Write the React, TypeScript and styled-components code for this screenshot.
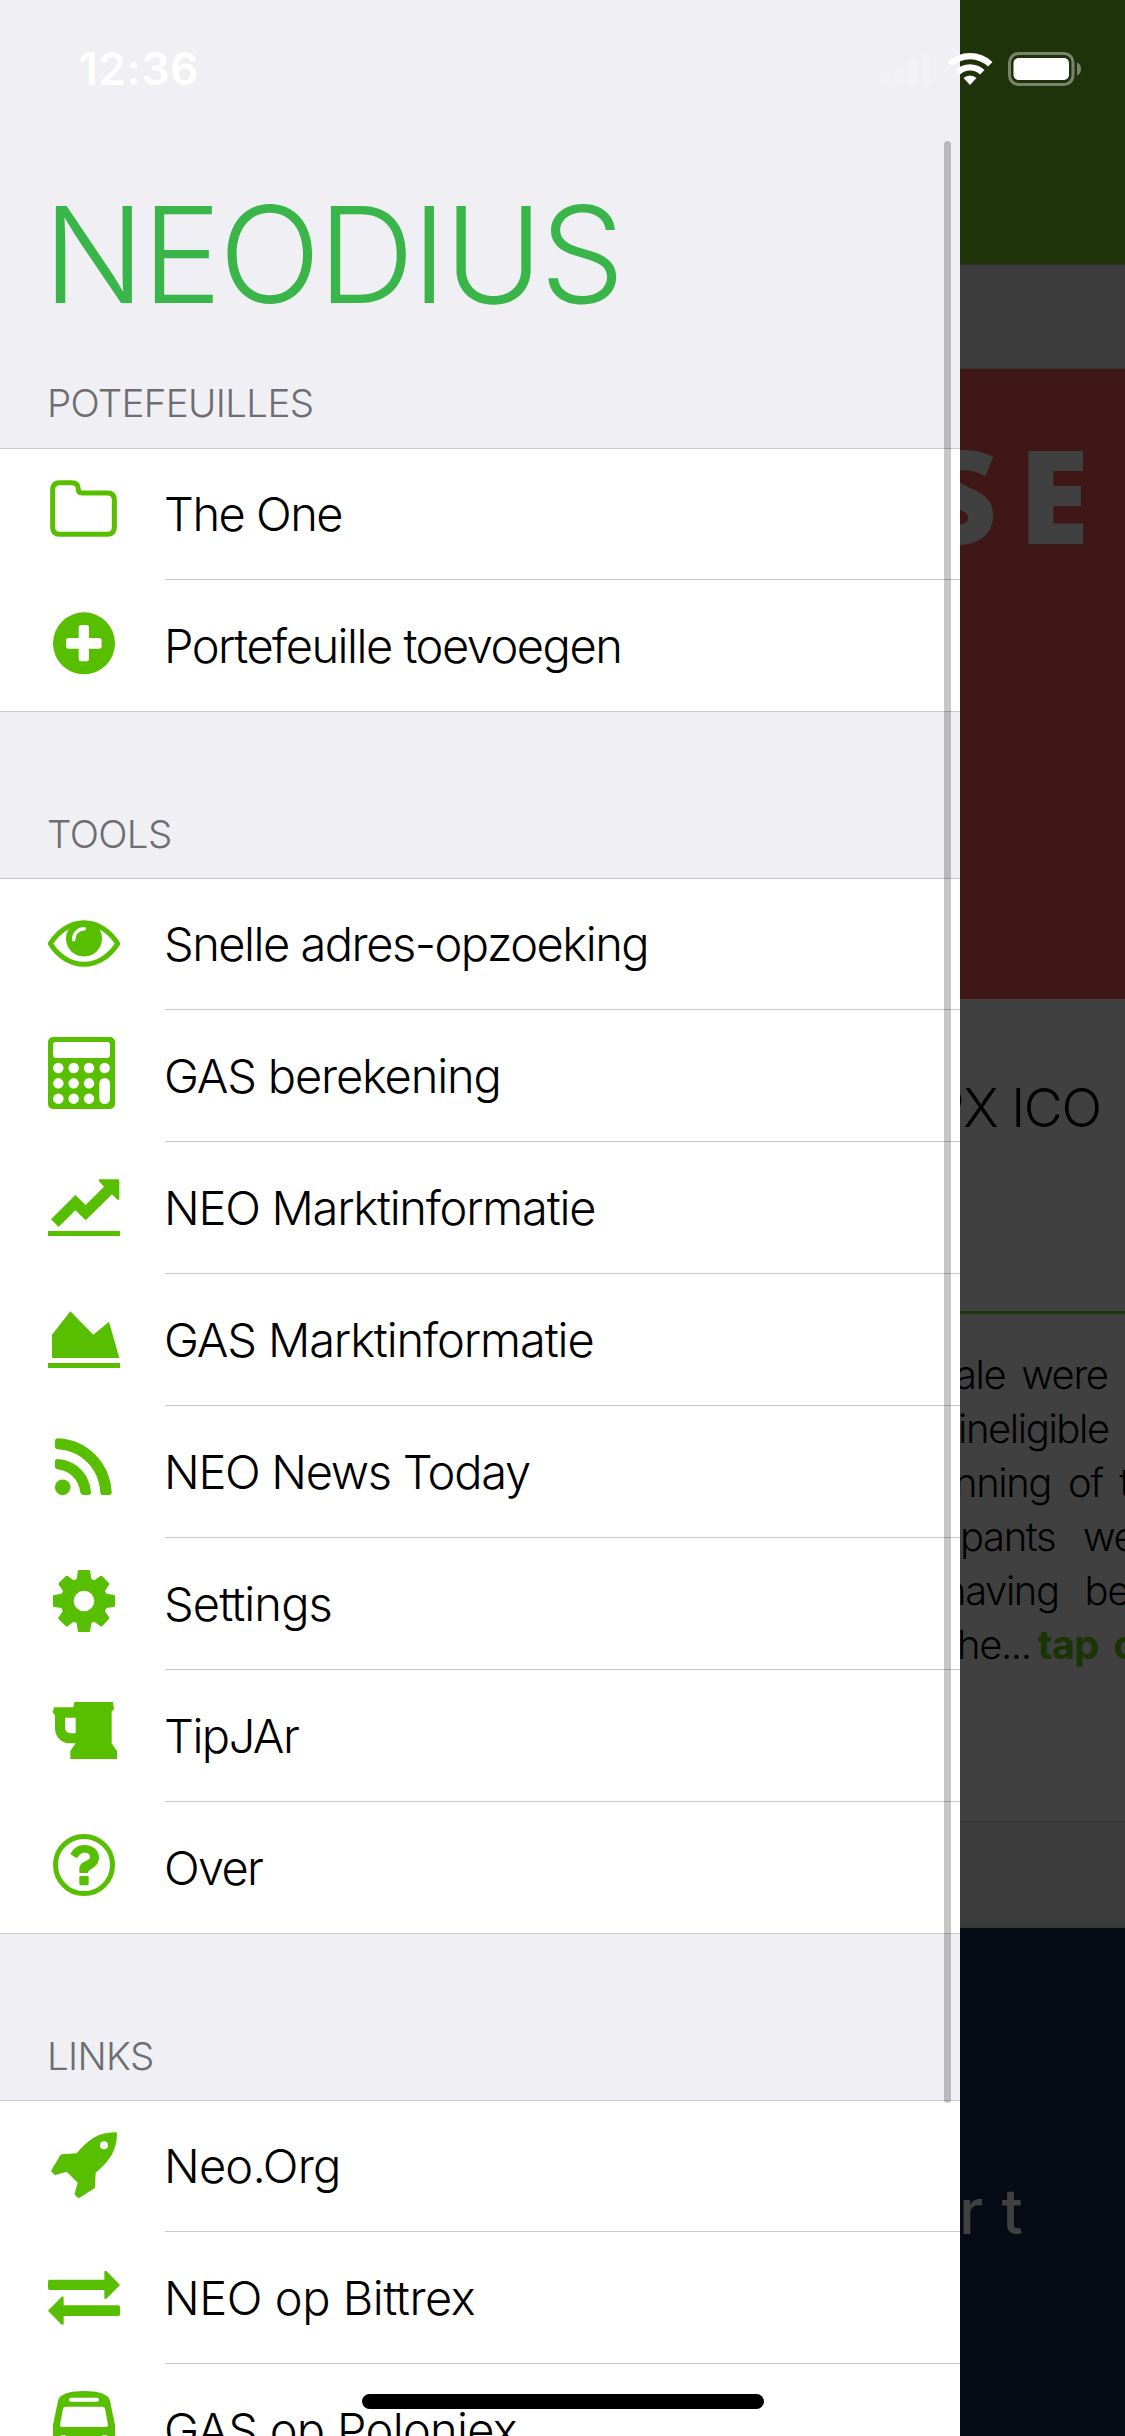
import React from "react";
import styled, { createGlobalStyle, css } from "styled-components";

const GREEN = "#58bf00";
const SEPARATOR = "#c8c7cc";
const SANS = `Inter, "Liberation Sans", sans-serif`;

const GlobalStyle = createGlobalStyle`
  *, *::before, *::after { box-sizing: border-box; }
  html, body { margin: 0; padding: 0; background: #404040; }
  body { font-family: ${SANS}; overflow: hidden; }
`;

const Screen = styled.div`
  position: relative;
  display: flex;
  width: 1125px;
  height: 2436px;
  overflow: hidden;
`;

/* ---------- drawer ---------- */

const Drawer = styled.aside`
  flex: 0 0 960px;
  height: 100%;
  overflow: hidden;
  background: #efeff4;
`;

const DrawerHeader = styled.header`
  height: 448px;
  padding: 169px 0 0 43px;
`;

const Brand = styled.h1`
  margin: 0;
  height: 170px;
  line-height: 170px;
  font-size: 134px;
  font-weight: 300;
  letter-spacing: -2.7px;
  color: #3ab54a;
  white-space: nowrap;
`;

const SectionTitle = styled.h2`
  margin: 0;
  padding-left: 47px;
  font-size: 38.5px;
  line-height: 48px;
  font-weight: 300;
  letter-spacing: -0.65px;
  color: #6d6d72;
  white-space: nowrap;
`;

const BrandSectionTitle = styled(SectionTitle)`
  margin-top: 40px;
  padding-left: 4px;
`;

const SectionHeader = styled.div`
  height: 166px;
  padding-top: 98px;
`;

const Group = styled.ul`
  list-style: none;
  margin: 0;
  padding: 0;
  background: #fff;
  border-top: 1px solid ${SEPARATOR};
  border-bottom: 1px solid ${SEPARATOR};
`;

const Label = styled.span<{ $tracking: number }>`
  flex: 1;
  height: 100%;
  margin-left: 45px;
  border-bottom: 1px solid ${SEPARATOR};
  font-size: 47px;
  line-height: 131px;
  font-weight: 300;
  letter-spacing: ${(p) => p.$tracking}px;
  text-indent: -1px;
  color: #000;
  white-space: nowrap;
`;

const Row = styled.li`
  display: flex;
  align-items: flex-start;
  height: 132px;
  padding-left: 48px;

  &:first-child { height: 131px; }
  &:first-child ${Label} { line-height: 129px; }
  &:last-child { height: 131px; }
  &:last-child ${Label} { border-bottom: none; }
`;

const Glyph = styled.svg`
  flex: 0 0 72px;
  height: 131px;
  fill: ${GREEN};
`;

/* ---------- dimmed page behind the drawer ---------- */

const Page = styled.main`
  flex: 1;
  display: flex;
  flex-direction: column;
  height: 100%;
  overflow: hidden;
  background: #404040;
`;

const NavBar = styled.div`
  flex: 0 0 265px;
  background: #1e330a;
  border-bottom: 1px solid #2f2f2f;
`;

const Gap = styled.div<{ $height: number; $line?: boolean }>`
  flex: 0 0 ${(p) => p.$height}px;
  background: #3c3c3c;
  border-bottom: 1px solid #363636;
  ${(p) => p.$line && css`border-top: 1px solid #333;`}
`;

const RedBanner = styled.div`
  flex: 0 0 630px;
  padding-top: 61px;
  background: #3f1717;
`;

const BannerWord = styled.div`
  margin-left: -37px;
  font-family: "Open Sans", "Noto Sans", sans-serif;
  font-size: 129px;
  line-height: 129px;
  font-weight: 800;
  letter-spacing: 21px;
  color: #404040;
  white-space: nowrap;
`;

const Article = styled.article`
  flex: 0 0 822px;
  overflow: hidden;
`;

const ArticleTitle = styled.h3`
  height: 312px;
  margin: 0;
  padding-top: 77px;
  margin-left: -29px;
  font-size: 53.5px;
  line-height: 64px;
  font-weight: 300;
  letter-spacing: -1.3px;
  color: #000;
  white-space: nowrap;
`;

const Rule = styled.div`
  height: 3px;
  margin-bottom: 34px;
  background: #1d360a;
`;

const Line = styled.p<{ $shift: number; $gap: number }>`
  margin: 0 0 0 ${(p) => p.$shift}px;
  font-size: 40px;
  line-height: 54px;
  font-weight: 300;
  letter-spacing: -1.4px;
  word-spacing: ${(p) => p.$gap}px;
  color: #000;
  white-space: nowrap;
`;

const More = styled.b`
  margin-left: 7px;
  font-weight: 700;
  letter-spacing: -0.8px;
  word-spacing: 6px;
  color: #1a3504;
`;

const NavyBanner = styled.div`
  flex: 1;
  padding-top: 238px;
  background: #060b15;
`;

const NavyWord = styled.div`
  margin-left: -1px;
  font-size: 63px;
  line-height: 90px;
  font-weight: 500;
  letter-spacing: 17px;
  color: #404040;
  white-space: nowrap;
`;

/* ---------- overlays ---------- */

const StatusBar = styled.div`
  position: absolute;
  inset: 0 0 auto 0;
  display: flex;
  align-items: center;
  height: 138px;
  padding: 0 43px 0 79px;
  color: #fff;
`;

const Clock = styled.time`
  flex: 1;
  font-size: 44.5px;
  font-weight: 600;
  letter-spacing: 0.5px;
`;

const StatusIcons = styled.svg`
  width: 202px;
  height: 36px;
  fill: #fff;
`;

const ScrollThumb = styled.div`
  position: absolute;
  left: 944px;
  top: 141px;
  width: 7px;
  height: 1962px;
  border-radius: 4px;
  background: rgba(0, 0, 0, 0.225);
`;

const HomeIndicator = styled.div`
  position: absolute;
  left: 362px;
  top: 2394px;
  width: 402px;
  height: 15px;
  border-radius: 8px;
  background: #000;
`;

/* ---------- icons ---------- */

const glyphs: Record<string, { top: number; art: React.ReactNode }> = {
  folder: {
    top: 27,
    art: (
      <path
        d="M38 149 Q38 128 59 128 H94 Q115 128 115 148 Q115 159 126 159 H202 Q223 159 223 180 V262 Q223 283 202 283 H59 Q38 283 38 262 Z"
        fill="none" stroke={GREEN} strokeWidth="15"
      />
    ),
  },
  plus: {
    top: 420,
    art: (
      <>
        <circle cx="132" cy="610" r="93" />
        <rect x="116" y="555" width="31" height="109" rx="8" fill="#fff" />
        <rect x="78" y="594" width="107" height="32" rx="8" fill="#fff" />
      </>
    ),
  },
  eye: {
    top: -78,
    art: (
      <>
        <path d="M31 116 C54 79 91 53 132 53 C173 53 210 79 233 116 C210 153 173 178 132 178 C91 178 54 153 31 116 Z" fill="none" stroke={GREEN} strokeWidth="15" strokeLinejoin="round" />
        <path d="M96 58 H168 L180 76 A54 54 0 1 1 84 76 Z" />
        <path d="M101 104 C101 86 114 71 133 71" fill="none" stroke="#fff" strokeWidth="10.5" strokeLinecap="round" />
      </>
    ),
  },
  calculator: {
    top: 315,
    art: (
      <>
        <rect x="24" y="396" width="201" height="216" rx="15" />
        <g fill="#fff">
          <rect x="39" y="411" width="171" height="48" rx="9" />
          {[55, 101, 147].map((x) =>
            [489, 535, 581].map((y) => <circle key={`${x}-${y}`} cx={x} cy={y} r="15.7" />)
          )}
          <circle cx="194" cy="489" r="15.7" />
          <rect x="178" y="519" width="32" height="78" rx="16" />
        </g>
      </>
    ),
  },
  trend: {
    top: 711,
    art: (
      <>
        <path d="M33 943 L106 870 L137 900 L192 845 L177 829 V823 H234 Q238 823 238 828 V884 H232 L216 868 L137 946 L106 916 L56 966 Z" />
        <rect x="24" y="978" width="216" height="15" />
      </>
    ),
  },
  area: {
    top: 1107,
    art: (
      <>
        <path d="M36 1359 V1289 L91 1219 L160 1289 L207 1250 L238 1359 Z" />
        <rect x="24" y="1374" width="216" height="15" />
      </>
    ),
  },
  rss: {
    top: -57,
    art: (
      <>
        <circle cx="68" cy="187" r="23.5" />
        <path d="M53 102 C108 106 149 146 153 202 Q153 210 145 210 H129 Q122 210 121 202 C117 165 90 138 53 133 Q45 132 45 126 V109 Q45 102 53 102 Z" />
        <path d="M54 40 C141 43 212 114 215 202 Q215 210 207 210 H189 Q181 210 181 203 C178 131 124 77 53 73 Q45 72 45 65 V48 Q45 40 54 40 Z" />
      </>
    ),
  },
  gear: {
    top: 339,
    art: (
      <path
        fillRule="evenodd"
        d="M117 435 H147 Q150 435 150.500 438 L154 462 L163 466 L181 453 Q184 451 187 454 L206 473 Q209 476 207 479 L195 497 L199 506 L222 510 Q225 511 225 514 V542 Q225 545 222 546 L199 549 L195 559 L207 577 Q209 580 206 583 L187 603 Q184 606 181 604 L163 590 L154 594 L150.500 618 Q150 621 147 621 H117 Q114 621 113.500 618 L110 594 L101 590 L83 604 Q80 606 77 603 L56 583 Q53 580 56 577 L68 559 L65 549 L42 546 Q39 545 39 542 V514 Q39 511 42 510 L65 506 L69 497 L56 479 Q54 476 57 473 L77 454 Q80 451 83 453 L101 466 L110 462 L113.500 438 Q114 435 117 435 Z M132 497 A31 31 0 1 0 132 559 A31 31 0 1 0 132 497 Z"
      />
    ),
  },
  mug: {
    top: 735,
    art: (
      <path
        fillRule="evenodd"
        d="M103 831 H219 L222 853 L215 859 V955 L231 979 V1002 H91 V978 L107 955 H89 C63 955 45 935 45 910 V870 L38 863 L42 847 H100 Z M75 878 V909 Q76 924 91 925 H107 V878 Z"
      />
    ),
  },
  question: {
    top: 1131,
    art: (
      <>
        <circle cx="132" cy="1320" r="85.500" fill="none" stroke={GREEN} strokeWidth="15" />
        <path d="M91 1287 C101 1269 115 1260 133 1260 C158 1260 177 1276 177 1297 C177 1314 168 1324 155 1331 C148 1335 144 1338 144 1344 H121 Q118 1344 118 1341 V1332 C118 1319 126 1313 139 1307 C147 1303 150 1300 150 1295 C150 1287 143 1283 133 1283 C122 1283 118 1290 110 1300 Z" />
        <rect x="118" y="1353" width="28" height="28" rx="4" />
      </>
    ),
  },
  rocket: {
    top: -42,
    art: (
      <>
        <path d="M110 115 C142 77 174 51 227 52 Q231 52 231 56 C230 108 208 138 167 173 L165 216 Q165 219 163 220 L119 248 Q115 250 112 247 L106 241 Q103 239 104 235 L113 203 L80 170 L49 179 Q45 181 42 178 L35 171 Q32 168 35 164 L61 121 Q63 118 67 118 Z" />
        <circle cx="192" cy="91" r="12" fill="#fff" />
      </>
    ),
  },
  exchange: {
    top: 351,
    art: (
      <>
        <path d="M29 494 H193 V471 Q194 466 199 468 L240 510 L199 551 Q194 553 193 549 V525 H29 Q24 525 24 520 V499 Q24 494 29 494 Z" />
        <path d="M235 571 H71 V548 Q70 542 65 545 L24 587 L65 629 Q70 631 71 626 V603 H235 Q240 603 240 598 V576 Q240 571 235 571 Z" />
      </>
    ),
  },
  bus: {
    top: 747,
    art: (
      <>
        <path d="M39 1140 V930 L54 857 C58 837 91 828 132 828 C173 828 206 837 210 857 L225 930 V1140 Z" />
        <g fill="#fff">
          <rect x="87" y="848" width="90" height="12" rx="6" />
          <path d="M78 875 H187 Q194 875 195 881 L204 929 Q204 936 197 936 H67 Q60 936 60 929 L69 881 Q70 875 78 875 Z" />
          <circle cx="70" cy="975" r="15" />
          <circle cx="194" cy="975" r="15" />
        </g>
      </>
    ),
  },
};

type Item = { icon: string; label: string; tracking?: number };

const wallets: Item[] = [
  { icon: "folder", label: "The One" },
  { icon: "plus", label: "Portefeuille toevoegen" },
];

const tools: Item[] = [
  { icon: "eye", label: "Snelle adres-opzoeking" },
  { icon: "calculator", label: "GAS berekening", tracking: -1.17 },
  { icon: "trend", label: "NEO Marktinformatie", tracking: -1.25 },
  { icon: "area", label: "GAS Marktinformatie", tracking: -1.12 },
  { icon: "rss", label: "NEO News Today", tracking: -1.3 },
  { icon: "gear", label: "Settings", tracking: -0.9 },
  { icon: "mug", label: "TipJAr" },
  { icon: "question", label: "Over", tracking: -1.7 },
];

const links: Item[] = [
  { icon: "rocket", label: "Neo.Org", tracking: -0.8 },
  { icon: "exchange", label: "NEO op Bittrex", tracking: -0.45 },
  { icon: "bus", label: "GAS op Poloniex", tracking: -0.7 },
];

const Menu = ({ items }: { items: Item[] }) => (
  <Group>
    {items.map(({ icon, label, tracking = -1.5 }) => (
      <Row key={label}>
        <Glyph viewBox={`24 ${glyphs[icon].top} 216 393`} aria-hidden="true">
          {glyphs[icon].art}
        </Glyph>
        <Label $tracking={tracking}>{label}</Label>
      </Row>
    ))}
  </Group>
);

export default function App() {
  return (
    <>
      <GlobalStyle />
      <Screen>
        <Drawer>
          <DrawerHeader>
            <Brand>NEODIUS</Brand>
            <BrandSectionTitle>POTEFEUILLES</BrandSectionTitle>
          </DrawerHeader>
          <Menu items={wallets} />
          <SectionHeader>
            <SectionTitle>TOOLS</SectionTitle>
          </SectionHeader>
          <Menu items={tools} />
          <SectionHeader>
            <SectionTitle>LINKS</SectionTitle>
          </SectionHeader>
          <Menu items={links} />
        </Drawer>

        <Page>
          <NavBar />
          <Gap $height={104} />
          <RedBanner>
            <BannerWord>SE</BannerWord>
          </RedBanner>
          <Article>
            <ArticleTitle>PX ICO</ArticleTitle>
            <Rule />
            <Line $shift={-5} $gap={6}>ale were</Line>
            <Line $shift={-2} $gap={0}>ineligible</Line>
            <Line $shift={-6} $gap={7}>nning of the</Line>
            <Line $shift={0} $gap={18}>pants were</Line>
            <Line $shift={-17} $gap={16}>having been</Line>
            <Line $shift={-3} $gap={0}>he...<More>tap on</More></Line>
          </Article>
          <Gap $height={107} $line />
          <NavyBanner>
            <NavyWord>rt</NavyWord>
          </NavyBanner>
        </Page>

        <StatusBar>
          <Clock>12:36</Clock>
          <StatusIcons viewBox="880 51 202 36" aria-hidden="true">
            <g opacity="0.2">
              <rect x="881" y="73" width="9" height="12" rx="2" />
              <rect x="894.500" y="67" width="9" height="18" rx="2" />
              <rect x="908.500" y="60" width="9" height="25" rx="2" />
              <rect x="922" y="53.500" width="9" height="31.500" rx="2" />
            </g>
            <path d="M970 85 L963.500 78 A9.500 9.500 0 0 1 976.500 78 Z" />
            <path d="M960 74.500 L955.500 70 A21 21 0 0 1 984.500 70 L980 74.500 A14.500 14.500 0 0 0 960 74.500 Z" />
            <path d="M952 66.500 L947.500 62 A32.500 32.500 0 0 1 992.500 62 L988 66.500 A26 26 0 0 0 952 66.500 Z" />
            <rect x="1009.500" y="53.500" width="63.500" height="31" rx="9" fill="none" stroke="#fff" strokeOpacity="0.4" strokeWidth="3" />
            <rect x="1013.500" y="58" width="55.500" height="22" rx="5" />
            <path d="M1077 62.500 Q1081 64 1081 69 Q1081 74 1077 75.500 Z" opacity="0.4" />
          </StatusIcons>
        </StatusBar>
        <ScrollThumb />
        <HomeIndicator />
      </Screen>
    </>
  );
}
